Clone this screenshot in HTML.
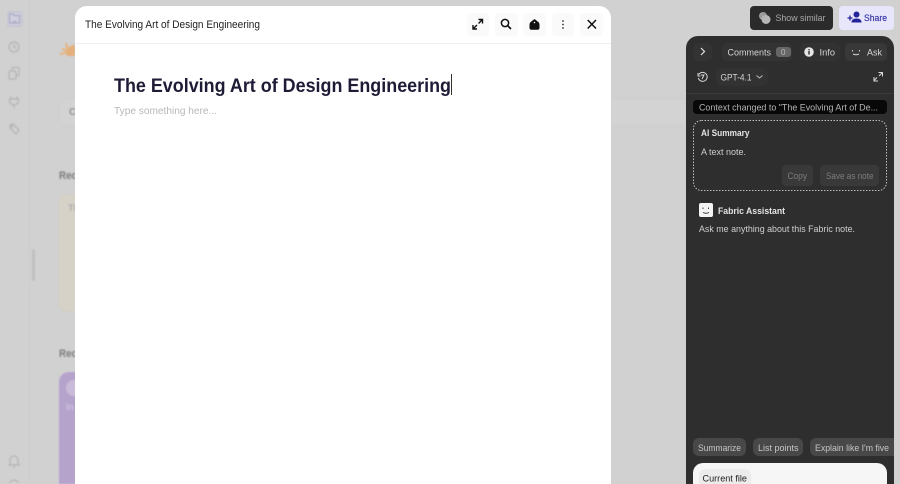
<!DOCTYPE html>
<html><head><meta charset="utf-8"><style>
html,body{margin:0;padding:0;width:900px;height:484px;overflow:hidden;background:#d1d1d1}
svg{display:block;overflow:hidden}
text{font-family:"Liberation Sans",sans-serif;white-space:pre}
</style></head><body>
<svg width="900" height="484" viewBox="0 0 900 484" xmlns="http://www.w3.org/2000/svg">
<defs>
<filter id="b" x="0" y="0" width="100%" height="100%"><feGaussianBlur stdDeviation="0.7"/></filter>
<clipPath id="panel"><path d="M686 484V48a12 12 0 0 1 12-12H882a12 12 0 0 1 12 12V484z"/></clipPath>
<clipPath id="page"><rect width="900" height="484"/></clipPath>
</defs>
<rect width="900" height="484" fill="#d1d1d1"/>
<g clip-path="url(#page)">
<g filter="url(#b)">
<rect x="29" y="0" width="1" height="484" fill="#cbcbcb"/>
<rect x="32" y="249" width="3" height="32" rx="1.500" fill="#c0c0c0"/>
<rect x="7" y="12" width="15" height="14" rx="3" fill="#d0d0de" stroke="#bcbcd2"/>
<path d="M9.500 16v-2h3.500l1 1.500h5.500v7.500h-10z" fill="none" stroke="#9a9ab8" stroke-width="1"/>
<path d="M12.500 18.500h.1M16.500 18.500h.1M13 21q1.500 1 3 0" stroke="#9a9ab8" fill="none"/>
<g fill="none" stroke="#adadad" stroke-width="1">
<circle cx="14" cy="47" r="5"/><path d="M14 44v3l2 1"/>
<rect x="9" y="71" width="7" height="8" rx="1.500"/><path d="M12 70v-1.500q0-1 1-1h5q1 0 1 1v6q0 1-1 1h-2"/>
<path d="M11 96v3M17 96v3M9.500 99h9v1.500a4 4 0 0 1-9 0zM14 105v3"/>
<path d="M10 125l3-1 6 6-3 4-6-6z"/><circle cx="12" cy="126.500" r=".6"/>
<path d="M10 464v-4a4 4 0 0 1 8 0v4l1 1H9zM13 467h2"/>
<path d="M9.500 483a5 5 0 0 1 9 0"/>
</g>
<path d="M60 54l8-1.500M62 49l6 2M66 43l1.500 6" stroke="#e7b27a" stroke-width="2" fill="none"/>
<path d="M67 56a8 8 0 0 1 8-11v11z" fill="#e5b07c"/>
<rect x="59" y="99" width="640" height="27" rx="8" fill="#d3d3d3" stroke="#cdcdcd"/>
<text x="69" y="115" font-size="10" font-weight="700" fill="#8c8c8c">C</text>
<text x="59" y="179" font-size="11" font-weight="700" fill="#7b7b7b" textLength="18" lengthAdjust="spacingAndGlyphs">Rec</text>
<rect x="59" y="195" width="40" height="116" rx="7" fill="#d6d2c7" stroke="#d2cdc1"/>
<text x="68" y="211" font-size="9" font-weight="700" fill="#aaa">Th</text>
<text x="59" y="357" font-size="11" font-weight="700" fill="#7b7b7b" textLength="18" lengthAdjust="spacingAndGlyphs">Rec</text>
<path d="M59 484V382a10 10 0 0 1 10-10H119V484z" fill="#b5a3cc"/>
<circle cx="74" cy="388" r="8" fill="#c9bcda"/>
<text x="66" y="410" font-size="9" fill="#d6cde2">In</text>
</g>

<!-- Modal -->
<path d="M75 484V18a12 12 0 0 1 12-12H599a12 12 0 0 1 12 12V484z" fill="#fff"/>
<rect x="75" y="43" width="536" height="1" fill="#efefef"/>
<text x="85" y="28" font-size="11" fill="#222" textLength="175" lengthAdjust="spacingAndGlyphs">The Evolving Art of Design Engineering</text>
<g fill="#fafafa">
<rect x="467" y="13" width="22" height="23" rx="4"/><rect x="495" y="13" width="23" height="23" rx="4"/><rect x="523" y="13" width="23" height="23" rx="4"/><rect x="552" y="13" width="22" height="23" rx="4"/><rect x="580" y="13" width="23" height="23" rx="4"/>
</g>
<g fill="none" stroke="#111" stroke-width="1.400">
<path d="M478.500 23.500l4-4M478.500 19.500h4v4M477 25l-4 4M473 25v4h4"/>
<circle cx="505" cy="23" r="3.600" stroke-width="1.500"/><path d="M507.700 25.700l3.300 3.300" stroke-width="1.700"/>
<path d="M587.700 20l8.300 8.500M596 20l-8.300 8.500" stroke-width="1.500"/>
</g>
<path d="M534.500 19l3.500 2.700q1.500 1.100 1.500 3v3q0 2-2 2h-6q-2 0-2-2v-3q0-1.900 1.500-3z" fill="#111"/>
<circle cx="534.500" cy="22.500" r=".8" fill="#fafafa"/>
<g fill="#333"><circle cx="563" cy="21" r=".9"/><circle cx="563" cy="24.500" r=".9"/><circle cx="563" cy="28" r=".9"/></g>
<text x="114" y="92" font-size="19" font-weight="700" fill="#1e1b36" textLength="337" lengthAdjust="spacingAndGlyphs">The Evolving Art of Design Engineering</text>
<rect x="451" y="74" width="1" height="21" fill="#333"/>
<text x="114" y="114" font-size="10.500" fill="#b8b8b8" textLength="103" lengthAdjust="spacingAndGlyphs">Type something here...</text>

<!-- Top buttons -->
<rect x="750" y="6" width="83" height="24" rx="4" fill="#2b2b2b"/>
<circle cx="763" cy="16" r="4" fill="#9a9a9a"/><circle cx="766" cy="19.500" r="4.500" fill="#b5b5b5"/>
<text x="775.500" y="21" font-size="9.200" fill="#a9a9a9" textLength="50" lengthAdjust="spacingAndGlyphs">Show similar</text>
<rect x="839" y="6" width="55" height="24" rx="4" fill="#e8e6fa"/>
<circle cx="856.500" cy="14.500" r="3" fill="#23239a"/><path d="M851.500 22.500q0-4 5-4t5 4z" fill="#23239a"/>
<path d="M847.500 18h5M850 15.500v5" stroke="#23239a" stroke-width="1.300"/>
<text x="864" y="21" font-size="9.500" fill="#3333a6" stroke="#3333a6" stroke-width=".15" textLength="23" lengthAdjust="spacingAndGlyphs">Share</text>

<!-- Panel -->
<path d="M686 484V48a12 12 0 0 1 12-12H882a12 12 0 0 1 12 12V484z" fill="#2e2e2e"/>
<g clip-path="url(#panel)">
<rect x="693" y="43" width="19" height="18" rx="5" fill="#333"/>
<path d="M701 48l3.500 3.500-3.500 3.500" fill="none" stroke="#e0e0e0" stroke-width="1.200"/>
<rect x="722" y="43" width="70" height="18" rx="5" fill="#333"/>
<text x="727.500" y="55.500" font-size="9.500" fill="#d4d4d4" textLength="43.500" lengthAdjust="spacingAndGlyphs">Comments</text>
<rect x="776" y="47" width="15" height="10" rx="3" fill="#666"/>
<text x="781" y="55" font-size="8" fill="#bdbdbd">0</text>
<rect x="800" y="43" width="40" height="18" rx="5" fill="#323232"/>
<circle cx="809" cy="52" r="4.800" fill="#e6e6e6"/><rect x="808.300" y="51" width="1.400" height="3.500" fill="#2e2e2e"/><rect x="808.300" y="49" width="1.400" height="1.300" fill="#2e2e2e"/>
<text x="819.500" y="55.500" font-size="9.500" fill="#d4d4d4" textLength="15.500" lengthAdjust="spacingAndGlyphs">Info</text>
<rect x="845" y="43" width="42" height="18" rx="5" fill="#383838"/>
<path d="M852.500 50v1.500M859.500 50v1.500M853 54q3 1.500 6 0" fill="none" stroke="#cfcfcf"/>
<text x="867" y="55.500" font-size="9.500" fill="#d8d8d8" textLength="15" lengthAdjust="spacingAndGlyphs">Ask</text>

<g fill="none" stroke="#d8d8d8" stroke-width="1">
<path d="M698.800 74.500a4.500 4.500 0 1 1-.5 3.500M698 73v3h2.500M701 75h3l-2 4"/>
<path d="M874 80.500l3-3M874 77v4h4M879 76l3.500-3.500M878.500 72.500h4v4"/>
</g>
<rect x="716" y="68" width="52" height="18" rx="6" fill="#323232"/>
<text x="720.500" y="80.500" font-size="9.500" fill="#d4d4d4" textLength="31" lengthAdjust="spacingAndGlyphs">GPT-4.1</text>
<path d="M756.500 75.500l3 2.500 3-2.500" fill="none" stroke="#bbb"/>
<rect x="686" y="93" width="208" height="1" fill="#3a3a3a"/>

<rect x="693" y="100" width="194" height="14" rx="4" fill="#080808"/>
<text x="699" y="110.500" font-size="9.200" fill="#b5b5b5" textLength="179" lengthAdjust="spacingAndGlyphs">Context changed to "The Evolving Art of De...</text>

<rect x="693.500" y="120.500" width="193" height="70" rx="8" fill="none" stroke="#bdbdbd" stroke-width="1" stroke-dasharray="1.500 1.500"/>
<text x="701" y="136" font-size="9.300" font-weight="700" fill="#e4e4e4" textLength="48.500" lengthAdjust="spacingAndGlyphs">AI Summary</text>
<text x="701" y="155" font-size="9.500" fill="#cfcfcf" textLength="45" lengthAdjust="spacingAndGlyphs">A text note.</text>
<rect x="782" y="165" width="31" height="21" rx="4" fill="#393939"/>
<text x="787.500" y="179" font-size="9.200" fill="#7d7d7d" textLength="19.500" lengthAdjust="spacingAndGlyphs">Copy</text>
<rect x="820" y="165" width="59" height="21" rx="4" fill="#393939"/>
<text x="826" y="179" font-size="9.200" fill="#7d7d7d" textLength="47.500" lengthAdjust="spacingAndGlyphs">Save as note</text>

<rect x="699" y="203" width="14" height="14" rx="2" fill="#f4f4f4"/>
<path d="M703 207.500v1.500M708.500 207.500v1.500M703 212.500q3 1.500 6 0" fill="none" stroke="#333" stroke-width=".9"/>
<text x="718" y="214" font-size="9.300" font-weight="700" fill="#e4e4e4" textLength="67" lengthAdjust="spacingAndGlyphs">Fabric Assistant</text>
<text x="699" y="232" font-size="9.300" fill="#cfcfcf" textLength="156" lengthAdjust="spacingAndGlyphs">Ask me anything about this Fabric note.</text>

<rect x="693" y="438" width="53" height="18" rx="6" fill="#484848"/>
<text x="698" y="451" font-size="9.300" fill="#c6c6c6" textLength="43" lengthAdjust="spacingAndGlyphs">Summarize</text>
<rect x="753" y="438" width="50" height="18" rx="6" fill="#484848"/>
<text x="758" y="451" font-size="9.300" fill="#c6c6c6" textLength="40.500" lengthAdjust="spacingAndGlyphs">List points</text>
<path d="M894 438H816a6 6 0 0 0-6 6v6a6 6 0 0 0 6 6H894z" fill="#484848"/>
<text x="815" y="451" font-size="9.300" fill="#c6c6c6" textLength="74" lengthAdjust="spacingAndGlyphs">Explain like I'm five</text>

<path d="M693 484V473a10 10 0 0 1 10-10H877a10 10 0 0 1 10 10V484z" fill="#f6f6f6"/>
<path d="M699 484V475a6 6 0 0 1 6-6H745a6 6 0 0 1 6 6V484z" fill="#ececec"/>
<text x="702.500" y="481.500" font-size="9.500" fill="#1d1d1d" textLength="44.500" lengthAdjust="spacingAndGlyphs">Current file</text>
</g>
</g>
</svg>
</body></html>
